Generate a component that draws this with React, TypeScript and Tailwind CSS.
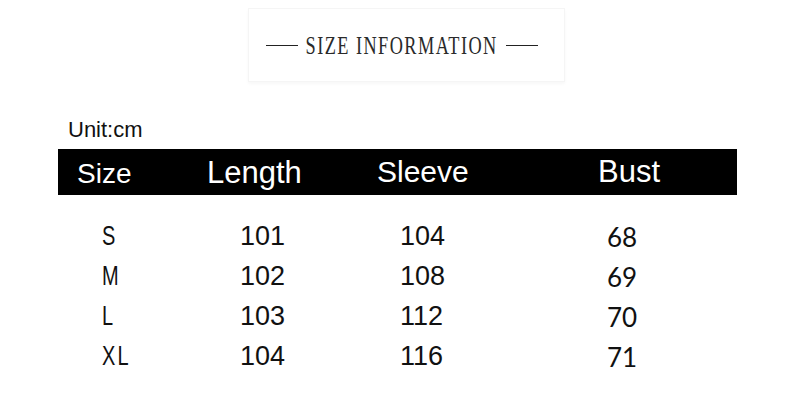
import React from "react";

const rows = [
  { size: "S", length: "101", sleeve: "104", bust: "68" },
  { size: "M", length: "102", sleeve: "108", bust: "69" },
  { size: "L", length: "103", sleeve: "112", bust: "70" },
  { size: "XL", length: "104", sleeve: "116", bust: "71" },
];

const App: React.FC = () => {
  return (
    <div className="w-[800px] h-[415px] bg-white overflow-hidden text-[#111] font-['Liberation_Sans',Arial,sans-serif]">
      {/* Title */}
      <div className="ml-[248px] mt-[8px] w-[317px] h-[74px] border border-[#f5f5f5] shadow-[0_2px_3px_rgba(0,0,0,0.03)] flex items-center justify-center">
        <div className="flex items-center gap-[9px] mr-[10px]">
          <span className="block w-[32px] h-px bg-[#222]" />
          <span className="flex w-[190px] justify-center">
            <span className="inline-block shrink-0 whitespace-nowrap text-[25px] leading-none tracking-[2px] font-['Liberation_Serif',serif] scale-x-[0.73] text-[#2a2a2a]">
              SIZE INFORMATION
            </span>
          </span>
          <span className="block w-[32px] h-px bg-[#222]" />
        </div>
      </div>

      {/* Unit */}
      <div className="ml-[68px] mt-[37px] text-[22px] leading-[22px]">Unit:cm</div>

      {/* Header bar */}
      <div className="ml-[58px] mt-[8px] w-[679px] h-[46px] bg-black text-white flex items-center pt-[2px]">
        <div className="w-[149px] pl-[19px] text-[28px] leading-[30px] mt-[2px]">Size</div>
        <div className="w-[170px] text-[31px] leading-[30px]">Length</div>
        <div className="w-[221px] text-[30px] leading-[30px] -mt-[2px]">Sleeve</div>
        <div className="text-[31px] leading-[30px] -mt-[2px]">Bust</div>
      </div>

      {/* Data */}
      <div className="mt-[21px] ml-[102px] flex flex-col">
        {rows.map((r) => (
          <div key={r.size} className="flex items-center h-[40px]">
            <div className="w-[138px]">
              <span className="inline-block origin-left scale-x-[0.74] text-[27px] leading-none tracking-[3px] mt-[2px]">
                {r.size}
              </span>
            </div>
            <div className="w-[160px] text-[27px] leading-none">{r.length}</div>
            <div className="w-[207px] text-[27px] leading-none">{r.sleeve}</div>
            <div className="text-[26px] leading-none mt-[2px] font-['Lato',sans-serif]">{r.bust}</div>
          </div>
        ))}
      </div>
    </div>
  );
};

export default App;
